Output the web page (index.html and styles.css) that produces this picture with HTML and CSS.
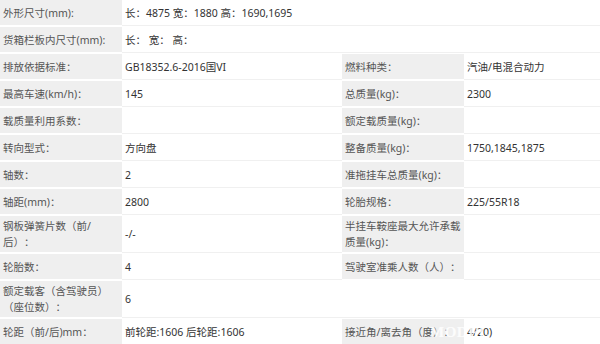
FILE: index.html
```html
<!DOCTYPE html>
<html lang="zh-CN">
<head>
<meta charset="utf-8">
<title>参数</title>
<link rel="stylesheet" href="styles.css">
</head>
<body>
<div class="table">
  <div class="row">
    <div class="lab">外形尺寸(mm):</div>
    <div class="val span3">长：4875 宽：1880 高：1690,1695</div>
  </div>
  <div class="row">
    <div class="lab">货箱栏板内尺寸(mm):</div>
    <div class="val span3">长： 宽： 高：</div>
  </div>
  <div class="row">
    <div class="lab">排放依据标准：</div>
    <div class="val">GB18352.6-2016国VI</div>
    <div class="lab">燃料种类：</div>
    <div class="val">汽油/电混合动力</div>
  </div>
  <div class="row">
    <div class="lab">最高车速(km/h)：</div>
    <div class="val">145</div>
    <div class="lab">总质量(kg)：</div>
    <div class="val">2300</div>
  </div>
  <div class="row">
    <div class="lab">载质量利用系数：</div>
    <div class="val"></div>
    <div class="lab">额定载质量(kg)：</div>
    <div class="val"></div>
  </div>
  <div class="row">
    <div class="lab">转向型式：</div>
    <div class="val">方向盘</div>
    <div class="lab">整备质量(kg)：</div>
    <div class="val">1750,1845,1875</div>
  </div>
  <div class="row">
    <div class="lab">轴数：</div>
    <div class="val">2</div>
    <div class="lab">准拖挂车总质量(kg)：</div>
    <div class="val"></div>
  </div>
  <div class="row">
    <div class="lab">轴距(mm)：</div>
    <div class="val">2800</div>
    <div class="lab">轮胎规格：</div>
    <div class="val">225/55R18</div>
  </div>
  <div class="row">
    <div class="lab">钢板弹簧片数（前/后）：</div>
    <div class="val">-/-</div>
    <div class="lab">半挂车鞍座最大允许承载质量(kg)：</div>
    <div class="val"></div>
  </div>
  <div class="row">
    <div class="lab">轮胎数：</div>
    <div class="val">4</div>
    <div class="lab">驾驶室准乘人数（人）：</div>
    <div class="val"></div>
  </div>
  <div class="row">
    <div class="lab">额定载客（含驾驶员）（座位数）：</div>
    <div class="val span3">6</div>
  </div>
  <div class="row">
    <div class="lab">轮距（前/后)mm：</div>
    <div class="val">前轮距:1606 后轮距:1606</div>
    <div class="lab">接近角/离去角（度）：</div>
    <div class="val">4/20)</div>
  </div>
  <span class="mark">MODEL</span>
</div>
</body>
</html>
```

FILE: styles.css
```css
html, body {
  margin: 0;
  padding: 0;
  background: #fff;
}
body {
  font-family: "Noto Sans", "Noto Sans CJK SC", sans-serif;
  font-size: 10.5px;
  line-height: 16px;
  color: #333;
  text-spacing-trim: space-all;
}
.table {
  position: relative;
  width: 600px;
}
.row {
  display: grid;
  grid-template-columns: 122px 220px 122px 136px;
}
.lab, .val {
  display: flex;
  align-items: center;
  min-height: 25px;
  padding: 2px 3px;
  box-sizing: border-box;
}
.lab {
  background: #efefef;
  color: #555;
  margin-bottom: 2px;
}
.val {
  border-bottom: 1px solid #f0f0f0;
  margin-bottom: 1px;
  min-height: 26px;
}
.span3 {
  grid-column: 2 / 5;
}
.mark {
  position: absolute;
  left: 430px;
  top: 324px;
  font-family: "Liberation Serif", serif;
  font-weight: bold;
  font-size: 15px;
  line-height: 16px;
  color: rgba(255, 255, 255, 0.85);
  letter-spacing: 0.5px;
}
```
